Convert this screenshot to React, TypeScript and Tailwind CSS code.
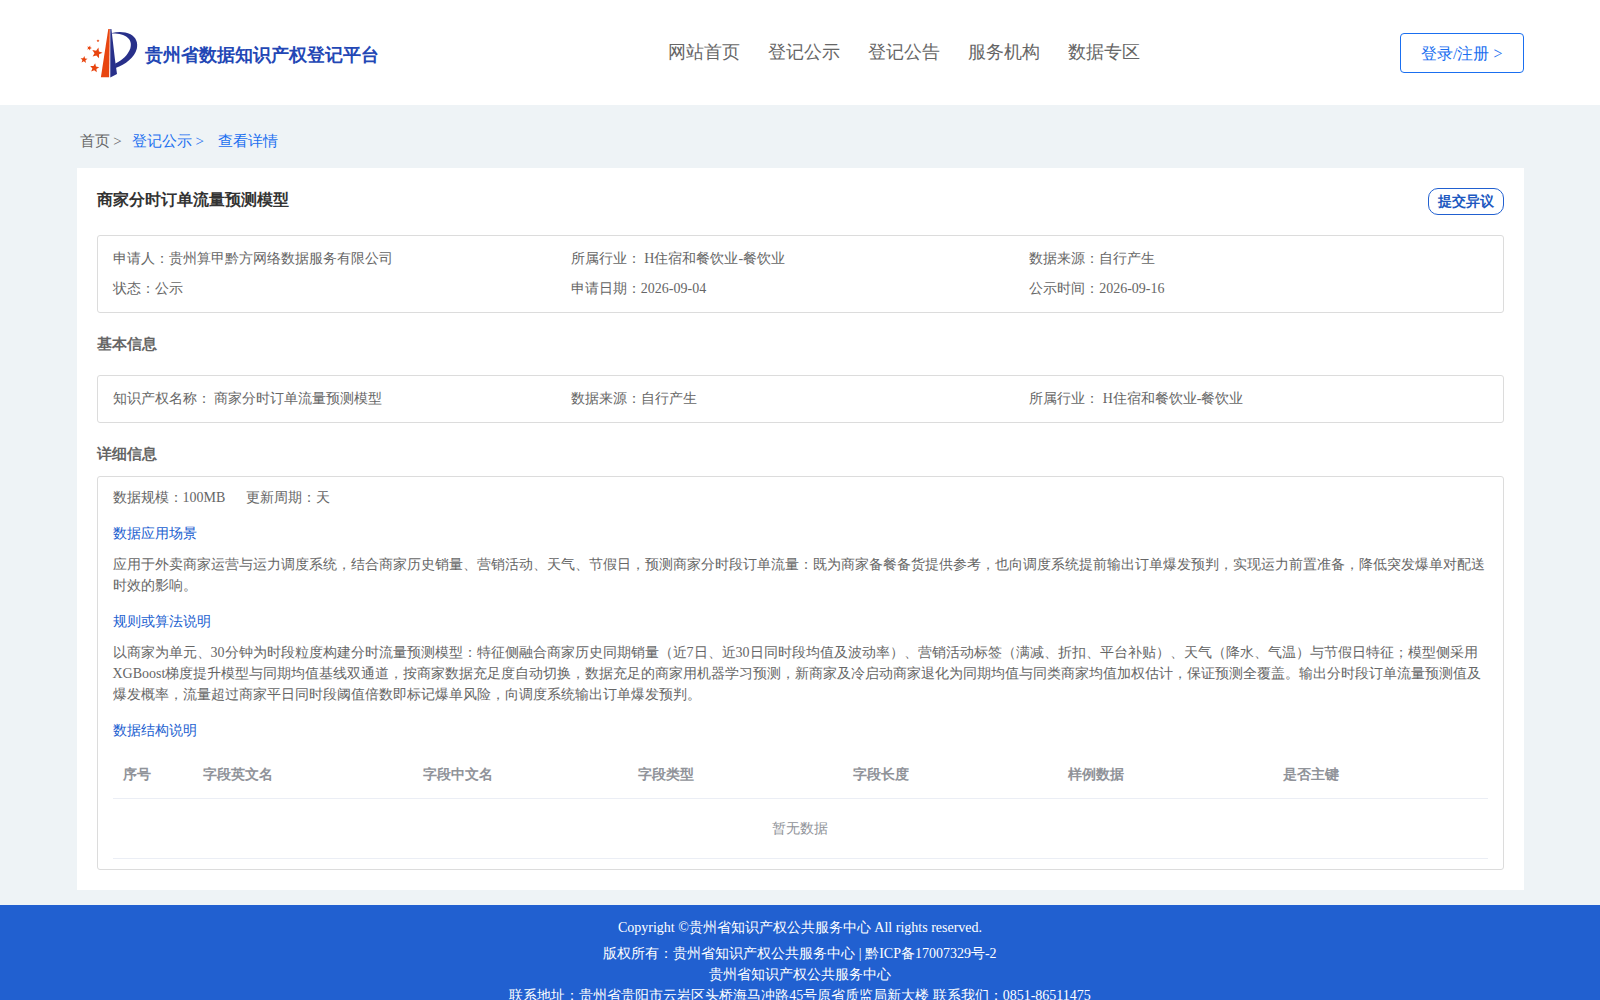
const navItems = ['网站首页', '登记公示', '登记公告', '服务机构', '数据专区'];

const summary = [
  '申请人：贵州算甲黔方网络数据服务有限公司',
  '所属行业： H住宿和餐饮业-餐饮业',
  '数据来源：自行产生',
  '状态：公示',
  '申请日期：2026-09-04',
  '公示时间：2026-09-16',
];

const basics = [
  '知识产权名称： 商家分时订单流量预测模型',
  '数据来源：自行产生',
  '所属行业： H住宿和餐饮业-餐饮业',
];

const columns = ['序号', '字段英文名', '字段中文名', '字段类型', '字段长度', '样例数据', '是否主键'];

const stars = [
  { x: 21, y: 29, size: 5.6, turn: 15 },
  { x: 18.5, y: 44, size: 4.8, turn: 8 },
  { x: 8, y: 35.7, size: 3.7, turn: 5 },
  { x: 13.3, y: 24, size: 2.6, turn: 20 },
  { x: 22, y: 16.8, size: 1.6, turn: 0 },
];

function Logo() {
  return (
    <svg className="h-[60px] w-[66px] shrink-0" viewBox="1 -1 66 60" aria-hidden="true">
      <path d="M32.300 5h1.500l-.7 48.300h-8.200z" fill="#e8450f" />
      <path d="M34.300 5h1.100l3.500 30 2.100 15-6.700 3.400z" fill="#28308a" />
      <path
        d="M36 9c6-1.700 13-1.500 18.500 1.300 5.500 3 7.800 8.500 6.300 14.500C58.500 33.500 49.500 40.500 39.600 44l-.6-4.300C46.500 36 52 31 54.300 24.500 57.300 15 49 9.300 36 9.600z"
        fill="#28308a"
      />
      {stars.map((s) => (
        <polygon
          key={s.x}
          fill="#e8450f"
          points="0,-1 .26,-.36 .95,-.31 .42,.14 .59,.81 0,.45 -.59,.81 -.42,.14 -.95,-.31 -.26,-.36"
          transform={`translate(${s.x} ${s.y}) rotate(${s.turn}) scale(${s.size})`}
        />
      ))}
    </svg>
  );
}

function InfoBox({ items }: { items: string[] }) {
  return (
    <ul className="grid grid-cols-3 rounded-[3px] border border-[#dcdcdc] px-[15px] py-2 leading-[30px]">
      {items.map((item) => (
        <li key={item}>{item}</li>
      ))}
    </ul>
  );
}

export default function App() {
  return (
    <div className="bg-[#eef3f6] font-['Liberation_Serif',serif] text-sm text-[#666]">
      <header className="bg-white">
        <div className="mx-auto flex h-[105px] w-full max-w-[1447px] items-center justify-between">
          <a href="#" className="flex items-center gap-[2px] pr-[30px]">
            <Logo />
            <span className="pt-1 text-lg font-bold text-[#2347b5]">贵州省数据知识产权登记平台</span>
          </a>
          <nav className="flex gap-7 pb-[2px] text-lg">
            {navItems.map((item) => (
              <a key={item} href="#">
                {item}
              </a>
            ))}
          </nav>
          <button
            type="button"
            className="h-10 rounded-[4px] border border-[#1a6ff0] px-5 pt-[2px] text-base text-[#1a6ff0]"
          >
            登录/注册 &gt;
          </button>
        </div>
      </header>

      <main className="mx-auto w-full max-w-[1447px] pb-[15px]">
        <nav className="flex h-[63px] items-center pt-[10px] pl-[3px] text-[15px]">
          <a href="#">首页 &gt;</a>
          <a href="#" className="ml-[10px] text-[#1a6ff0]">
            登记公示 &gt;
          </a>
          <a href="#" className="ml-[14px] text-[#1a6ff0]">
            查看详情
          </a>
        </nav>

        <section className="bg-white p-5">
          <div className="mb-5 flex items-start justify-between">
            <h1 className="text-base font-bold text-[#333]">商家分时订单流量预测模型</h1>
            <button
              type="button"
              className="h-[27px] rounded-[10px] border border-[#2160d0] px-[9px] font-bold text-[#2058c0]"
            >
              提交异议
            </button>
          </div>
          <InfoBox items={summary} />

          <h2 className="py-5 text-[15px] leading-[22px] font-bold">基本信息</h2>
          <InfoBox items={basics} />

          <h2 className="pt-5 pb-[11px] text-[15px] leading-[22px] font-bold">详细信息</h2>
          <div className="rounded-[3px] border border-[#dcdcdc] px-[15px] py-[10px] leading-[21px]">
            <div className="flex gap-[21px]">
              <span>数据规模：100MB</span>
              <span>更新周期：天</span>
            </div>
            <h3 className="mt-[15px] mb-[10px] text-[#2160d0]">数据应用场景</h3>
            <p>
              应用于外卖商家运营与运力调度系统，结合商家历史销量、营销活动、天气、节假日，预测商家分时段订单流量：既为商家备餐备货提供参考，也向调度系统提前输出订单爆发预判，实现运力前置准备，降低突发爆单对配送时效的影响。
            </p>
            <h3 className="mt-[15px] mb-[10px] text-[#2160d0]">规则或算法说明</h3>
            <p>
              以商家为单元、30分钟为时段粒度构建分时流量预测模型：特征侧融合商家历史同期销量（近7日、近30日同时段均值及波动率）、营销活动标签（满减、折扣、平台补贴）、天气（降水、气温）与节假日特征；模型侧采用XGBoost梯度提升模型与同期均值基线双通道，按商家数据充足度自动切换，数据充足的商家用机器学习预测，新商家及冷启动商家退化为同期均值与同类商家均值加权估计，保证预测全覆盖。输出分时段订单流量预测值及爆发概率，流量超过商家平日同时段阈值倍数即标记爆单风险，向调度系统输出订单爆发预判。
            </p>
            <h3 className="mt-[15px] mb-[10px] text-[#2160d0]">数据结构说明</h3>
            <table className="w-full table-fixed text-left text-[#909399]">
              <colgroup>
                <col className="w-20" />
                <col className="w-[220px]" />
              </colgroup>
              <thead>
                <tr className="h-[47px] border-b border-[#ebeef5]">
                  {columns.map((name) => (
                    <th key={name} scope="col" className="px-[10px] font-bold">
                      {name}
                    </th>
                  ))}
                </tr>
              </thead>
              <tbody>
                <tr className="h-[60px] border-b border-[#ebeef5]">
                  <td colSpan={columns.length} className="text-center">
                    暂无数据
                  </td>
                </tr>
              </tbody>
            </table>
          </div>
        </section>
      </main>

      <footer className="bg-[#2160d0] pt-3 pb-3 text-center leading-[21px] text-white">
        <p className="mb-[5px]">Copyright ©贵州省知识产权公共服务中心 All rights reserved.</p>
        <p>版权所有：贵州省知识产权公共服务中心 | 黔ICP备17007329号-2</p>
        <p>贵州省知识产权公共服务中心</p>
        <p>联系地址：贵州省贵阳市云岩区头桥海马冲路45号原省质监局新大楼 联系我们：0851-86511475</p>
      </footer>
    </div>
  );
}
